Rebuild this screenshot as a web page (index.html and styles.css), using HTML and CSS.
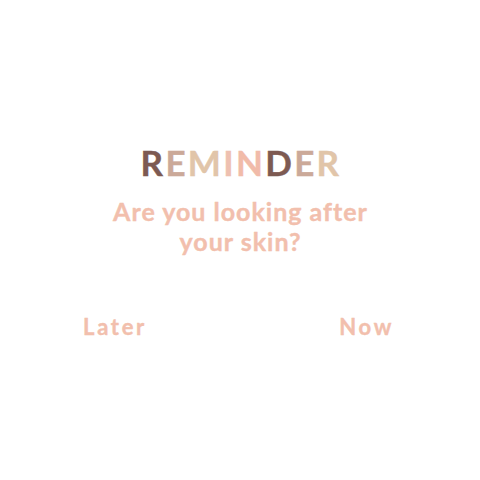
FILE: index.html
```html
<!DOCTYPE html>
<html>
<head>
<meta charset="utf-8">
<link rel="stylesheet" href="styles.css">
</head>
<body>
<main class="screen">
  <h1 class="title"><span class="c1">R</span><span class="c2">E</span><span class="c3">M</span><span class="c4">I</span><span class="c5">N</span><span class="c1">D</span><span class="c2">E</span><span class="c3">R</span></h1>
  <p class="question">Are you looking after<br>your skin?</p>
  <div class="actions">
    <span class="btn">Later</span>
    <span class="btn">Now</span>
  </div>
</main>
</body>
</html>
```
FILE: styles.css
```css
html, body {
  margin: 0;
  padding: 0;
  background: #ffffff;
}
.screen {
  width: 480px;
  height: 480px;
  display: flex;
  flex-direction: column;
  align-items: center;
  font-family: "Lato", "Noto Sans", sans-serif;
  font-weight: 700;
  -webkit-text-stroke: 0.4px currentColor;
}
.title {
  margin: 140px 0 0 2px;
  font-size: 35px;
  line-height: 44px;
  letter-spacing: 2.3px;
  font-weight: 700;
}
.c1 { color: #7d5a52; }
.c2 { color: #cba999; }
.c3 { color: #e1c5a9; }
.c4 { color: #eec0b0; }
.c5 { color: #f1bba9; }
.question {
  margin: 12px 0 0 1px;
  font-size: 25px;
  line-height: 30px;
  text-align: center;
  color: #f2bfad;
  letter-spacing: 1px;
}
.actions {
  margin-top: 56px;
  margin-left: -3px;
  width: 311px;
  display: flex;
  justify-content: space-between;
}
.btn {
  font-size: 22px;
  line-height: 30px;
  color: #f2bfad;
  letter-spacing: 2.7px;
}
```
